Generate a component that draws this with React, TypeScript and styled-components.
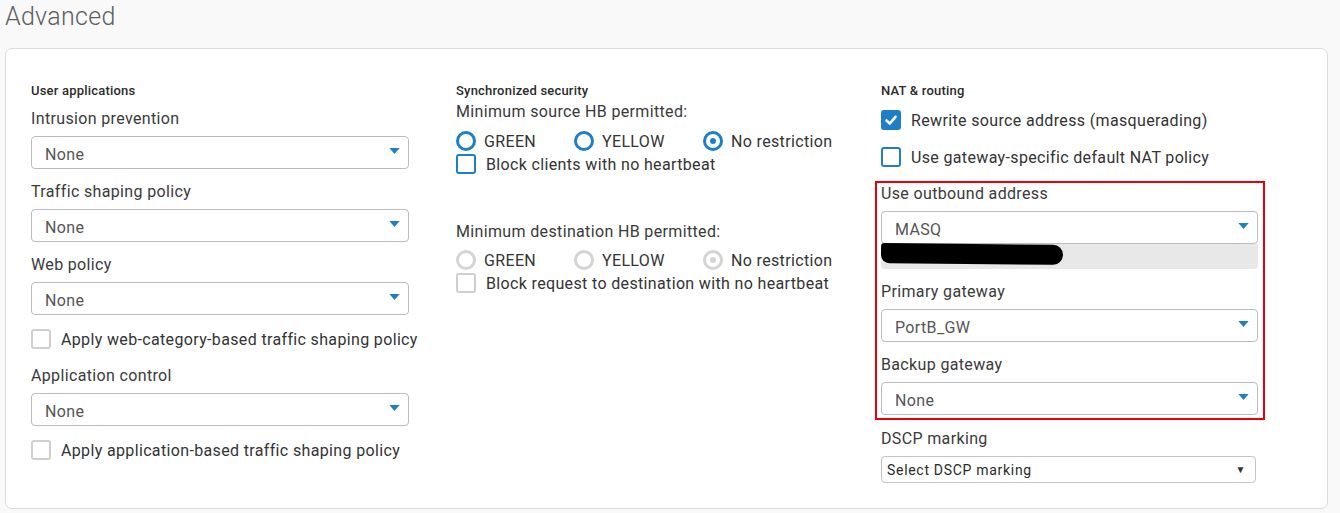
import { FC } from 'react';
import styled, { createGlobalStyle } from 'styled-components';

const GlobalStyle = createGlobalStyle`
  html, body {
    margin: 0;
    padding: 0;
    background: #f9f9f9;
  }
  body {
    font-family: Roboto, "Liberation Sans", sans-serif;
    color: #333;
  }
`;

const blue = '#1f7fc6';

const Select: FC<{ value: string }> = ({ value }) => (
  <SelectBox>
    <SelectValue>{value}</SelectValue>
    <Caret viewBox="0 0 12 7">
      <path d="M0 0 H12 L6 7 Z" fill={blue} />
    </Caret>
  </SelectBox>
);

const Checkbox: FC<{ label: string; checked?: boolean; tone?: 'blue' | 'gray' }> = ({
  label,
  checked,
  tone = 'gray',
}) => (
  <CheckRow>
    <Box $checked={checked} $tone={tone}>
      {checked && (
        <svg width="14" height="14" viewBox="0 0 14 14">
          <path d="M2.5 7.5 L5.8 10.5 L11.5 3.8" stroke="#fff" strokeWidth="2.6" fill="none" strokeLinecap="round" strokeLinejoin="round" />
        </svg>
      )}
    </Box>
    <CheckLabel>{label}</CheckLabel>
  </CheckRow>
);

const Radio: FC<{ label: string; selected?: boolean; disabled?: boolean }> = ({ label, selected, disabled }) => (
  <RadioItem>
    <Circle $disabled={disabled}>{selected && <Dot $disabled={disabled} />}</Circle>
    <RadioLabel>{label}</RadioLabel>
  </RadioItem>
);

const RadioGroup: FC<{ disabled?: boolean }> = ({ disabled }) => (
  <Radios>
    <Radio label="GREEN" disabled={disabled} />
    <Radio label="YELLOW" disabled={disabled} />
    <Radio label="No restriction" selected disabled={disabled} />
  </Radios>
);

export default function App() {
  return (
    <Page>
      <GlobalStyle />
      <Title>Advanced</Title>
      <Card>
        <Column>
          <SectionTitle>User applications</SectionTitle>
          <Field $top={10}>
            <Label>Intrusion prevention</Label>
            <Select value="None" />
          </Field>
          <Field>
            <Label>Traffic shaping policy</Label>
            <Select value="None" />
          </Field>
          <Field>
            <Label>Web policy</Label>
            <Select value="None" />
          </Field>
          <Spaced $top={14}>
            <Checkbox label="Apply web-category-based traffic shaping policy" />
          </Spaced>
          <Field $top={17}>
            <Label>Application control</Label>
            <Select value="None" />
          </Field>
          <Spaced $top={14}>
            <Checkbox label="Apply application-based traffic shaping policy" />
          </Spaced>
        </Column>

        <Column>
          <SectionTitle>Synchronized security</SectionTitle>
          <Spaced $top={3}>
            <Label>Minimum source HB permitted:</Label>
          </Spaced>
          <Spaced $top={9}>
            <RadioGroup />
          </Spaced>
          <Spaced $top={3}>
            <Checkbox label="Block clients with no heartbeat" tone="blue" />
          </Spaced>
          <Spaced $top={48}>
            <Label>Minimum destination HB permitted:</Label>
          </Spaced>
          <Spaced $top={8}>
            <RadioGroup disabled />
          </Spaced>
          <Spaced $top={3}>
            <Checkbox label="Block request to destination with no heartbeat" />
          </Spaced>
        </Column>

        <Column>
          <SectionTitle>NAT &amp; routing</SectionTitle>
          <Spaced $top={11}>
            <Checkbox label="Rewrite source address (masquerading)" checked tone="blue" />
          </Spaced>
          <Spaced $top={17}>
            <Checkbox label="Use gateway-specific default NAT policy" tone="blue" />
          </Spaced>
          <Highlight>
            <Field $top={0}>
              <Label>Use outbound address</Label>
              <Select value="MASQ" />
              <HiddenBar>
                <Redaction />
              </HiddenBar>
            </Field>
            <Field $top={13}>
              <Label>Primary gateway</Label>
              <Select value="PortB_GW" />
            </Field>
            <Field $top={13}>
              <Label>Backup gateway</Label>
              <Select value="None" />
            </Field>
          </Highlight>
          <Field $top={9}>
            <Label>DSCP marking</Label>
            <NativeSelect>
              <span>Select DSCP marking</span>
              <NativeCaret>▼</NativeCaret>
            </NativeSelect>
          </Field>
        </Column>
      </Card>
    </Page>
  );
}

const Page = styled.div`
  width: 1340px;
  height: 513px;
  box-sizing: border-box;
  padding: 0 12px 0 5px;
  overflow: hidden;
`;

const Title = styled.h1`
  margin: 0;
  height: 48px;
  padding-top: 1px;
  box-sizing: border-box;
  font-size: 25px;
  font-weight: 300;
  line-height: 32px;
  letter-spacing: 0.3px;
  color: #5f5f5f;
`;

const Card = styled.div`
  background: #fff;
  border: 1px solid #dcdcdc;
  border-radius: 7px;
  height: 461px;
  box-sizing: border-box;
  padding: 34px 0 0 25px;
  display: grid;
  grid-template-columns: 425px 425px 378px;
`;

const Column = styled.div`
  display: flex;
  flex-direction: column;
  width: 378px;
`;

const SectionTitle = styled.div`
  font-size: 13px;
  font-weight: 500;
  line-height: 16px;
  letter-spacing: 0.2px;
  color: #2b2b2b;
`;

const Field = styled.div<{ $top?: number }>`
  display: flex;
  flex-direction: column;
  margin-top: ${({ $top }) => $top ?? 13}px;
  gap: 7px;
`;

const Spaced = styled.div<{ $top: number }>`
  margin-top: ${({ $top }) => $top}px;
`;

const Label = styled.div`
  font-size: 16px;
  line-height: 20px;
  letter-spacing: 0.35px;
  color: #3a3a3a;
`;

const SelectBox = styled.div`
  height: 33px;
  box-sizing: border-box;
  border: 1px solid #b9bcc0;
  border-radius: 4px;
  background: #fff;
  display: flex;
  align-items: center;
  padding: 3px 8px 0 13px;
`;

const SelectValue = styled.span`
  flex: 1;
  font-size: 16px;
  letter-spacing: 0.35px;
  color: #555;
`;

const Caret = styled.svg`
  width: 11px;
  height: 6px;
  margin-top: -7px;
`;

const HiddenBar = styled.div`
  height: 25px;
  margin-top: -7px;
  background: #e8e8e8;
  border-radius: 0 0 4px 4px;
  display: flex;
  align-items: flex-start;
`;

const Redaction = styled.div`
  width: 182px;
  height: 20px;
  background: #000;
  border-radius: 4px 12px 12px 10px;
  transform: rotate(0.6deg);
`;

const CheckRow = styled.div`
  display: flex;
  align-items: center;
  gap: 10px;
  height: 20px;
  white-space: nowrap;
`;

const Box = styled.div<{ $checked?: boolean; $tone: 'blue' | 'gray' }>`
  width: 20px;
  height: 20px;
  box-sizing: border-box;
  border-radius: 3px;
  border: 2px solid ${({ $checked, $tone }) => ($checked || $tone === 'blue' ? blue : '#cfcfcf')};
  background: ${({ $checked }) => ($checked ? blue : '#fff')};
  display: flex;
  align-items: center;
  justify-content: center;
  flex: none;
`;

const CheckLabel = styled.span`
  font-size: 16px;
  letter-spacing: 0.35px;
  color: #333;
`;

const Radios = styled.div`
  display: grid;
  grid-template-columns: 118px 129px auto;
  height: 20px;
  white-space: nowrap;
`;

const RadioItem = styled.div`
  display: flex;
  align-items: center;
  gap: 8px;
`;

const Circle = styled.div<{ $disabled?: boolean }>`
  width: 20px;
  height: 20px;
  box-sizing: border-box;
  border-radius: 50%;
  border: 3px solid ${({ $disabled }) => ($disabled ? '#d4d4d4' : blue)};
  display: flex;
  align-items: center;
  justify-content: center;
  flex: none;
`;

const Dot = styled.div<{ $disabled?: boolean }>`
  width: 6px;
  height: 6px;
  border-radius: 50%;
  background: ${({ $disabled }) => ($disabled ? '#d4d4d4' : blue)};
`;

const RadioLabel = styled.span`
  font-size: 16px;
  letter-spacing: 0.35px;
  color: #333;
`;

const Highlight = styled.div`
  margin: 14px 0 0 -6px;
  width: 390px;
  box-sizing: border-box;
  border: 2px solid #e8000b;
  padding: 1px 5px 3px 4px;
`;

const NativeSelect = styled.div`
  width: 375px;
  height: 27px;
  box-sizing: border-box;
  border: 1px solid #c4c4c4;
  border-radius: 4px;
  display: flex;
  align-items: center;
  justify-content: space-between;
  padding: 0 9px 0 5px;
  font-size: 14px;
  letter-spacing: 0.7px;
  color: #2a2a2a;
`;

const NativeCaret = styled.span`
  font-size: 10px;
  color: #333;
`;
